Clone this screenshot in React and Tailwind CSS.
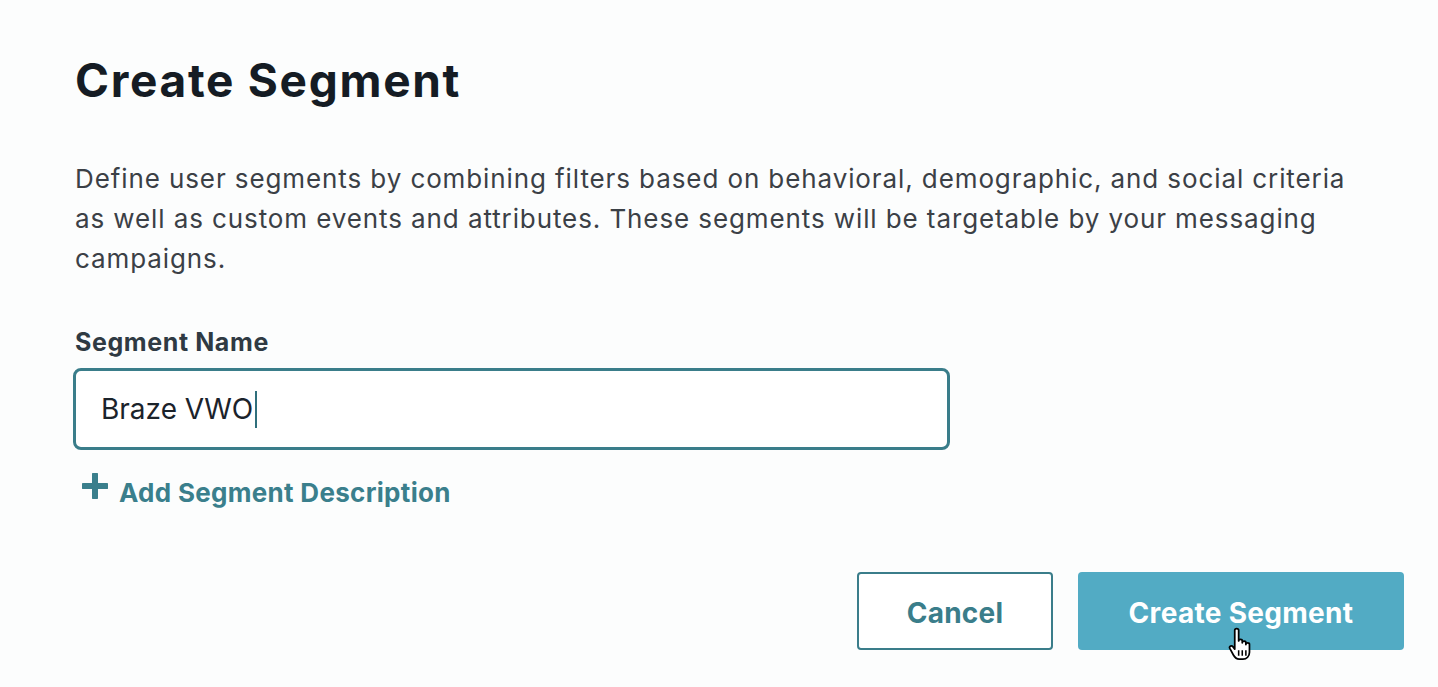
export default function App() {
  const font = { fontFamily: "Inter, 'Open Sans', Arial, sans-serif" };
  return (
    <div className="w-[1438px] h-[687px] bg-[#fcfdfd] overflow-hidden" style={font}>
      <div className="pl-[75px] pt-[52px]">
        <h1 className="text-[46px] leading-[56px] font-bold text-[#151c24] tracking-[1.7px]">Create Segment</h1>
        <p className="mt-[51px] text-[26px] leading-[40px] text-[#3b4046] max-w-[1300px] tracking-[0.9px]">
          Define user segments by combining filters based on behavioral, demographic, and social criteria as well as custom events and attributes. These segments will be targetable by your messaging campaigns.
        </p>
        <label className="block mt-[48px] text-[25px] leading-[30px] font-bold text-[#2f3a43] tracking-[0.6px]">Segment Name</label>
        <div className="mt-[11px] -ml-[2px] w-[877px] h-[82px] border-[3px] border-[#3a7d8a] rounded-[8px] bg-white flex items-center pl-[25px]">
          <span className="text-[28px] text-[#1b232b]">Braze VWO</span>
          <span className="ml-[2px] w-[2px] h-[37px] bg-[#2f6f7c]" />
        </div>
        <button className="mt-[27px] ml-[7px] flex items-start gap-[11px] text-[#3a7f8c]">
          <svg className="-mt-[4px]" width="26" height="26" viewBox="0 0 26 26">
            <path d="M13 1.5 V24.5 M1.5 13 H24.5" stroke="#3a7f8c" strokeWidth="6" strokeLinecap="round" />
          </svg>
          <span className="text-[26px] leading-[32px] font-bold tracking-[0.3px]">Add Segment Description</span>
        </button>
      </div>
      <div className="mt-[63px] pr-[34px] flex justify-end gap-[25px]">
        <button className="w-[196px] h-[78px] pt-[4px] border-2 border-[#3a7d8a] rounded-[4px] bg-white text-[28px] leading-[34px] font-bold text-[#3a7d8a] tracking-[0.2px]">Cancel</button>
        <div className="relative">
          <button className="w-[326px] h-[78px] pt-[4px] rounded-[4px] bg-[#52abc4] text-[28px] leading-[34px] font-bold text-white tracking-[0.3px]">Create Segment</button>
          <svg className="absolute left-[150px] top-[55px]" width="31" height="34" viewBox="0 0 30 33">
            <path d="M6.5 3.2 C6.5 1 10.3 1 10.3 3.2 V13.5 C10.3 11.5 13.8 11.5 13.8 13.5 V15.3 C13.8 13.3 17.3 13.3 17.3 15.3 V17 C17.3 15 20.8 15 20.8 17 V24.5 C20.8 28.5 18 31.2 14.5 31.2 H10.8 C8 31.2 6.5 29.5 5.2 27.2 L1.7 20.8 C0.7 18.8 3.4 17.3 4.9 19.3 L6.5 21.5 Z" fill="white" stroke="black" strokeWidth="1.7" strokeLinejoin="round" />
            <path d="M10.3 22.5 V28 M13.8 22.5 V28 M17.3 22.5 V28" stroke="black" strokeWidth="1.5" />
          </svg>
        </div>
      </div>
    </div>
  );
}
